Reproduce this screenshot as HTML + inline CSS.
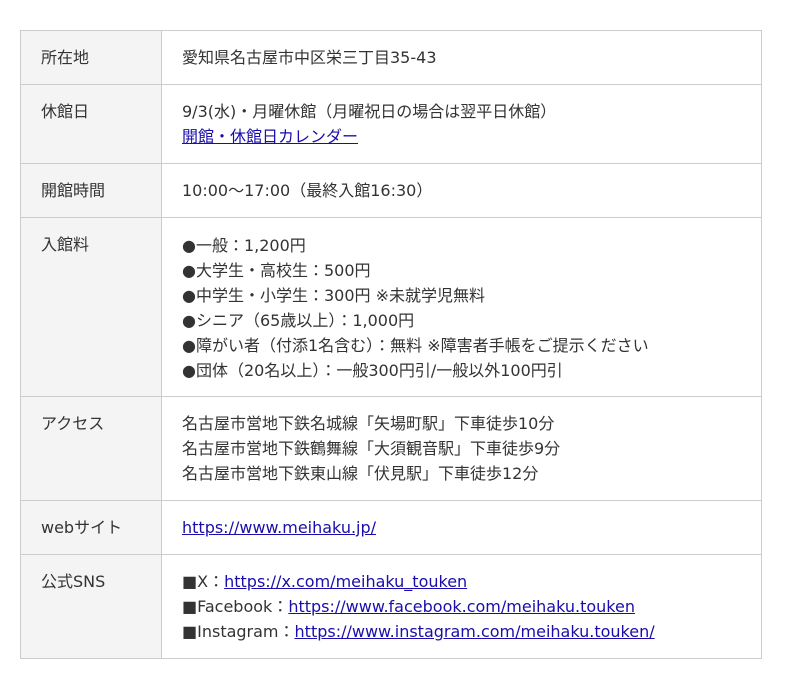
<!DOCTYPE html>
<html><head><meta charset="utf-8"><style>
body{margin:0;background:#fff;font-family:"DejaVu Sans","Noto Sans CJK JP",sans-serif;font-size:16px;color:#333;}
table{position:absolute;left:20px;top:30px;width:742px;border-collapse:collapse;}
th,td{border:1px solid #ccc;text-align:left;vertical-align:top;padding:14px 20px 13px 20px;line-height:25px;font-weight:normal;}
th{width:100px;background:#f4f4f4;}
a{color:#1a0dab;text-decoration:underline;}
</style></head><body>
<table>
<tr style="height:54px"><th>所在地</th><td>愛知県名古屋市中区栄三丁目35-43</td></tr>
<tr style="height:79px"><th>休館日</th><td>9/3(水)・月曜休館（月曜祝日の場合は翌平日休館）<br><a>開館・休館日カレンダー</a></td></tr>
<tr style="height:54px"><th>開館時間</th><td>10:00〜17:00（最終入館16:30）</td></tr>
<tr style="height:179px"><th>入館料</th><td style="padding-top:15px">●一般：1,200円<br>●大学生・高校生：500円<br>●中学生・小学生：300円 ※未就学児無料<br>●シニア（65歳以上）：1,000円<br>●障がい者（付添1名含む）：無料 ※障害者手帳をご提示ください<br>●団体（20名以上）：一般300円引/一般以外100円引</td></tr>
<tr style="height:104px"><th>アクセス</th><td>名古屋市営地下鉄名城線「矢場町駅」下車徒歩10分<br>名古屋市営地下鉄鶴舞線「大須観音駅」下車徒歩9分<br>名古屋市営地下鉄東山線「伏見駅」下車徒歩12分</td></tr>
<tr style="height:54px"><th>webサイト</th><td><a>https://www.meihaku.jp/</a></td></tr>
<tr style="height:104px"><th>公式SNS</th><td>■X：<a>https://x.com/meihaku_touken</a><br>■Facebook：<a>https://www.facebook.com/meihaku.touken</a><br>■Instagram：<a>https://www.instagram.com/meihaku.touken/</a></td></tr>
</table>
</body></html>
